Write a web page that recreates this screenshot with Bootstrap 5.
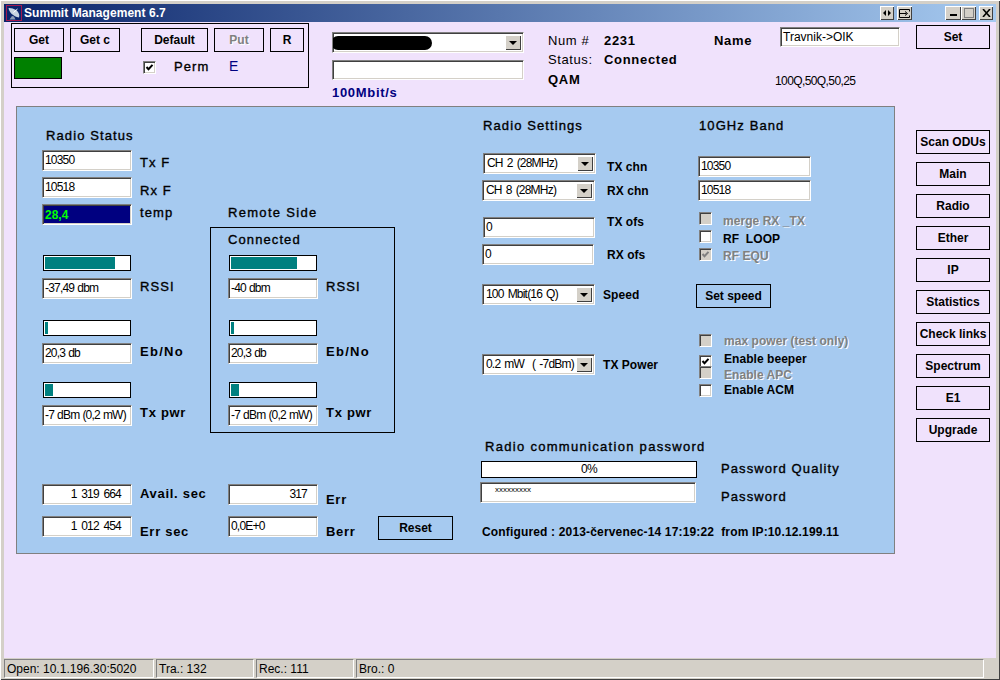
<!DOCTYPE html>
<html lang="en">
<head>
<meta charset="utf-8">
<title>Summit Management 6.7</title>
<link rel="stylesheet" href="https://cdn.jsdelivr.net/npm/bootstrap@5.3.0/dist/css/bootstrap.min.css">
<style>
body{margin:0;background:#d4d0c8;font-family:"Liberation Sans",Arial,sans-serif;color:#000;overflow:hidden}
.win{width:1000px;height:680px;padding:4px 4px 2px;background:#d4d0c8;box-shadow:inset 1px 1px 0 #fff,inset -1px -1px 0 #404040}
.ttl{height:18px;background:linear-gradient(90deg,#0a246a,#a6caf0);color:#fff;font-weight:700;font-size:12px;line-height:18px;letter-spacing:.05px;padding-left:2px}
.ttl svg{flex:none}
.tb{flex:none;height:14px;margin-top:2px;background:#d4d0c8;box-shadow:inset 1px 1px 0 #fff,inset -1px -1px 0 #404040;color:#000}
.tw14{width:14px}.tw15{width:15px}.tw16{width:16px}
.gapm{margin-left:33px}.endm{margin-right:3px}
.client{height:636px;background:#f0e2fc}
.mainc{width:912px}
.side{width:74px}
.hh{height:84px;flex:none}
.lb{font-weight:700;font-size:13px;line-height:16px;letter-spacing:.7px;white-space:nowrap;flex:none}
.lr{font-weight:400;letter-spacing:.6px}
.lm{font-weight:400;letter-spacing:1.1px;-webkit-text-stroke:.35px #000}
.lw{letter-spacing:1.3px}
.ls{font-size:12px;letter-spacing:.05px}
.lc{font-size:12px;letter-spacing:.16px}
.ee{font-size:14px;color:#000080;font-weight:400}
.navy{color:#000080}
.gry{color:#808080;text-shadow:1px 1px 0 #fff}
.btn.fb{--bs-btn-padding-x:0;--bs-btn-padding-y:0;display:block;background:transparent;border:1px solid #000;border-radius:0;color:#000;font-weight:700;font-size:12px;line-height:21px;height:24px;letter-spacing:0;flex:none;white-space:nowrap}
.btn.fb.off{color:#808080;opacity:1;text-shadow:1px 1px 0 #fff}
.form-control.fld{width:90px;height:21px;flex:none;padding:2px 2px 1px;border-radius:0;border:1px solid;border-color:#808080 #fff #fff #808080;box-shadow:inset 1px 1px 0 #404040,inset -1px -1px 0 #d4d0c8;background:#fff;font-size:12px;line-height:14px;letter-spacing:-.8px;word-spacing:.5px;color:#000;white-space:nowrap;overflow:hidden}
.fld.rt{text-align:right;padding-right:10px;word-spacing:2px}
.fld.dk{background:#000080;color:#0f0;font-weight:700;letter-spacing:0;font-size:12px;padding-top:3px}
.fld.wide{letter-spacing:0}
.fld.combo{padding-left:3px;word-spacing:1.5px}
.w113{width:113px!important}.w112{width:112px!important}.w120{width:120px!important}.w192{width:192px!important}.w216{width:216px!important}
.h20{height:20px!important}
.h13{height:13px}
.h21{height:21px}
.combo{position:relative}
.arrow{position:absolute;right:2px;top:2px;bottom:2px;width:16px;background:#d4d0c8;box-shadow:inset 1px 1px 0 #fff,inset -1px -1px 0 #404040}
.arrow::after{content:"";position:absolute;left:4px;top:6px;border:4px solid transparent;border-top:4px solid #000;border-bottom:0}
.blob{display:block;width:101px;height:14px;margin:1px 0 0 -5px;background:#000;border-radius:7px}
.progress.bar{width:88px;height:16px;flex:none;padding:1px;border:1px solid #000;border-radius:0;background:#fff;--bs-progress-bar-bg:#008080}
.progress.pq{width:216px;height:17px;justify-content:center;font-size:12px;line-height:13px;letter-spacing:-.6px;color:#000}
.form-check-input.ck{width:13px;height:13px;flex:none;border-radius:0;border:1px solid;border-color:#808080 #fff #fff #808080;box-shadow:inset 1px 1px 0 #404040,inset -1px -1px 0 #d4d0c8;background-color:#fff;opacity:1}
.ck{margin-top:0}
.form-check-input.ck:disabled{background-color:#d4d0c8;opacity:1}
.form-check-input.ck:checked{background-size:11px;background-image:url("data:image/svg+xml,%3Csvg xmlns='http://www.w3.org/2000/svg' viewBox='0 0 11 11'%3E%3Cpath d='M2.5 5l2 2.2 4-4.4' fill='none' stroke='%23000' stroke-width='2'/%3E%3C/svg%3E")}
.form-check-input.ck:checked:disabled{background-image:url("data:image/svg+xml,%3Csvg xmlns='http://www.w3.org/2000/svg' viewBox='0 0 11 11'%3E%3Cpath d='M2.5 5l2 2.2 4-4.4' fill='none' stroke='%23808080' stroke-width='2'/%3E%3C/svg%3E")}
.grp{width:298px;height:65px;padding:4px 0 0 2px;border:1px solid #000;flex:none;margin-left:7px}
.lamp{width:48px;height:22px;background:#008000;border:1px solid #000;flex:none}
.panel{width:879px;height:448px;margin-left:12px;padding-left:25px;background:#a6caf0;border:1px solid #808080}
.ca{width:168px;flex:none}
.colb{width:270px;flex:none}
.cc{width:218px;flex:none}
.rbox{width:185px;height:206px;border:1px solid #000;padding-left:17px}
.w52{width:52px;flex:none}.w50{width:50px}.w67{width:67px}.w34{width:34px}.w75{width:75px}.w74{width:74px}.w55{width:55px;flex:none}.w56{width:56px;flex:none}.w66{width:66px;flex:none}.w166{width:166px;flex:none}
.pass{font-size:8px!important;line-height:9px!important;padding:2px 0 0 14px!important;letter-spacing:0!important}
.smt{font-size:12px;line-height:16px;letter-spacing:-.6px;white-space:nowrap}
.stat{height:20px;font-size:12px;line-height:18px;gap:2px}
.stat div{border:1px solid;border-color:#808080 #fff #fff #808080;padding-left:2px;height:19px;margin-top:1px;flex:none}
.s150{width:150px}.s98{width:98px}.s628{width:628px}
.t0{margin-top:0}.t1{margin-top:1px}.t2{margin-top:2px}.t3{margin-top:3px}.t4{margin-top:4px}.t5{margin-top:5px}.t6{margin-top:6px}.t7{margin-top:7px}.t8{margin-top:8px}.t10{margin-top:10px}.t11{margin-top:11px}.t16{margin-top:16px}.t18{margin-top:18px}.t19{margin-top:19px}.t21{margin-top:21px}.t22{margin-top:22px}.t23{margin-top:23px}.t24{margin-top:24px}.t26{margin-top:26px}.t30{margin-top:30px}.t42{margin-top:42px}.t49{margin-top:49px}.t51{margin-top:51px}.t58{margin-top:58px}.t81{margin-top:81px}.t98{margin-top:98px}
.tn1{margin-top:-1px}.tn2{margin-top:-2px}.tn3{margin-top:-3px}.tn4{margin-top:-4px}
.x1{margin-left:1px}.x2{margin-left:2px}.x3{margin-left:3px}.x4{margin-left:4px}.x5{margin-left:5px}.x6{margin-left:6px}.x8{margin-left:8px}.x11{margin-left:11px}.x12{margin-left:12px}.x13{margin-left:13px}.x18{margin-left:18px}.x21{margin-left:21px}.x23{margin-left:23px}.x24{margin-left:24px}.x25{margin-left:25px}.x61{margin-left:61px}.x81{margin-left:81px}.xn2{margin-left:-2px}
</style>
</head>
<body>
<div class="win d-flex flex-column">
  <div class="ttl d-flex align-items-start">
    <svg class="t1" width="16" height="16" viewBox="0 0 16 16"><rect x=".5" y=".5" width="15" height="15" fill="#0a246a" stroke="#a01850"/><path d="M2.500 3c.5 4 4.500 8.500 10.500 9.500 1-3-.5-5.500-3-7.500C7.500 3.500 5 2.800 2.500 3z" fill="#c8d4e0"/><path d="M6 11l-2.500 3.500h6L8 11.500z" fill="#8c9cb4"/><path d="M7.500 7.500l4-3.500" stroke="#fff"/></svg>
    <span class="x2">Summit Management 6.7</span>
    <div class="tb tw14 ms-auto d-flex align-items-center justify-content-center"><svg width="8" height="6" viewBox="0 0 8 6"><path d="M3 0v6L0 3zM5 0v6l3-3z"/></svg></div>
    <div class="tb tw15 d-flex align-items-center justify-content-center x3"><svg width="11" height="9" viewBox="0 0 11 9"><path d="M10.500 2.500V.5h-10v8h10v-2M.5 4.500h7M6 2.500l2.500 2-2.500 2" fill="none" stroke="#000"/></svg></div>
    <div class="tb tw16 gapm d-flex align-items-end justify-content-center pb-1"><svg width="7" height="2" viewBox="0 0 7 2"><rect width="7" height="2"/></svg></div>
    <div class="tb tw15 d-flex align-items-center justify-content-center"><svg width="10" height="10" viewBox="0 0 10 10"><rect x=".5" y=".5" width="9" height="9" fill="none" stroke="#808080"/></svg></div>
    <div class="tb tw14 endm d-flex align-items-center justify-content-center x3"><svg width="9" height="8" viewBox="0 0 9 8"><path d="M1 0l7 8M8 0L1 8" stroke="#000" stroke-width="1.600"/></svg></div>
  </div>

  <div class="client d-flex">
    <div class="mainc d-flex flex-column">
      <div class="d-flex hh">
        <div class="grp t1">
          <div class="d-flex">
            <button class="btn fb w50">Get</button>
            <button class="btn fb w50 x6">Get c</button>
            <button class="btn fb w67 x21">Default</button>
            <button class="btn fb w50 x6 off" disabled>Put</button>
            <button class="btn fb w34 x6">R</button>
          </div>
          <div class="d-flex align-items-start t5">
            <div class="lamp"></div>
            <input class="form-check-input ck x81 t4" type="checkbox" checked aria-label="Perm">
            <span class="lb lm w55 x18 t2">Perm</span>
            <span class="lb ee t1">E</span>
          </div>
        </div>
        <div class="x23">
          <div class="form-control fld combo w192 t10"><span class="blob"></span><span class="arrow"></span></div>
          <div class="form-control fld w192 h20 t7"></div>
          <div class="lb navy t5">100Mbit/s</div>
        </div>
        <div class="w166 x24">
          <div class="d-flex t11"><span class="lb lr w56">Num #</span><span class="lb">2231</span></div>
          <div class="d-flex t3"><span class="lb lr w56">Status:</span><span class="lb">Connected</span></div>
          <div class="lb t4">QAM</div>
        </div>
        <div>
          <div class="d-flex align-items-start t5">
            <span class="lb w66 t6">Name</span>
            <div class="form-control fld wide w120 h20">Travnik-&gt;OIK</div>
          </div>
          <div class="smt x61 t24">100Q,50Q,50,25</div>
        </div>
      </div>

      <div class="panel d-flex">
        <div class="ca">
          <div class="lb lm x4 t21">Radio Status</div>
          <div class="d-flex align-items-start h21 t6"><div class="form-control fld">10350</div><span class="lb lm x8 t5">Tx F</span></div>
          <div class="d-flex align-items-start h21 t6"><div class="form-control fld">10518</div><span class="lb lm x8 t6">Rx F</span></div>
          <div class="d-flex align-items-start h21 t6"><div class="form-control fld dk">28,4</div><span class="lb lm x8 t1">temp</span></div>
          <div class="progress bar x1 t30"><div class="progress-bar" style="width:83%"></div></div>
          <div class="d-flex align-items-start h21 t7"><div class="form-control fld">-37,49 dbm</div><span class="lb lm x8 t1">RSSI</span></div>
          <div class="progress bar x1 t21"><div class="progress-bar" style="width:3.6%"></div></div>
          <div class="d-flex align-items-start h21 t7"><div class="form-control fld">20,3 db</div><span class="lb lw x8 t1">Eb/No</span></div>
          <div class="progress bar x1 t18"><div class="progress-bar" style="width:9.5%"></div></div>
          <div class="d-flex align-items-start h21 t7"><div class="form-control fld">-7 dBm (0,2 mW)</div><span class="lb x8">Tx pwr</span></div>
          <div class="d-flex align-items-start h21 t58"><div class="form-control fld rt">1 319 664</div><span class="lb x8 t2">Avail. sec</span></div>
          <div class="d-flex align-items-start h21 t11"><div class="form-control fld rt">1 012 454</div><span class="lb x8 t8">Err sec</span></div>
        </div>

        <div class="colb">
          <div class="lb lm lw x18 t98">Remote Side</div>
          <div class="rbox t6">
            <div class="lb lm t4">Connected</div>
            <div class="progress bar x1 t7"><div class="progress-bar" style="width:78.5%"></div></div>
            <div class="d-flex align-items-start h21 t7"><div class="form-control fld">-40 dbm</div><span class="lb lm x8 t1">RSSI</span></div>
            <div class="progress bar x1 t21"><div class="progress-bar" style="width:3.6%"></div></div>
            <div class="d-flex align-items-start h21 t7"><div class="form-control fld">20,3 db</div><span class="lb lw x8 t1">Eb/No</span></div>
            <div class="progress bar x1 t18"><div class="progress-bar" style="width:9.5%"></div></div>
            <div class="d-flex align-items-start h21 t7"><div class="form-control fld">-7 dBm (0,2 mW)</div><span class="lb x8">Tx pwr</span></div>
          </div>
          <div class="d-flex align-items-start h21 x18 t51"><div class="form-control fld rt">317</div><span class="lb x8 t8">Err</span></div>
          <div class="d-flex align-items-start h21 x18 t11"><div class="form-control fld">0,0E+0</div><span class="lb x8 t8 w52">Berr</span><button class="btn fb w75">Reset</button></div>
        </div>

        <div>
          <div class="d-flex">
            <div class="cc">
              <div class="lb lm x3 t11">Radio Settings</div>
              <div class="d-flex align-items-start h21 x3 t19"><div class="form-control fld combo w113">CH 2 (28MHz)<span class="arrow"></span></div><span class="lb ls x11 t6">TX chn</span></div>
              <div class="d-flex align-items-start h21 x2 t6"><div class="form-control fld combo w113">CH 8 (28MHz)<span class="arrow"></span></div><span class="lb ls x12 t3">RX chn</span></div>
              <div class="d-flex align-items-start h21 x3 t16"><div class="form-control fld w112">0</div><span class="lb ls x12 tn3">TX ofs</span></div>
              <div class="d-flex align-items-start h21 x2 t6"><div class="form-control fld w112">0</div><span class="lb ls x13 t3">RX ofs</span></div>
              <div class="d-flex align-items-start h21 x2 t19"><div class="form-control fld combo w113">100 Mbit(16 Q)<span class="arrow"></span></div><span class="lb ls x8 t3">Speed</span></div>
              <div class="d-flex align-items-start h21 x2 t49"><div class="form-control fld combo w113">0.2 mW &nbsp;( -7dBm)<span class="arrow"></span></div><span class="lb ls x8 t3">TX Power</span></div>
            </div>
            <div>
              <div class="lb lm x1 t11">10GHz Band</div>
              <div class="form-control fld w113 t22">10350</div>
              <div class="form-control fld w113 t3">10518</div>
              <div class="d-flex align-items-start x1 t11 h13"><input class="form-check-input ck" type="checkbox" disabled aria-label="merge"><span class="lb ls gry t1 x11">merge RX _TX</span></div>
              <div class="d-flex align-items-start x1 t5 h13"><input class="form-check-input ck" type="checkbox" aria-label="loop"><span class="lb ls t1 x11">RF &nbsp;LOOP</span></div>
              <div class="d-flex align-items-start x1 t5 h13"><input class="form-check-input ck" type="checkbox" checked disabled aria-label="equ"><span class="lb ls gry x11">RF EQU</span></div>
              <button class="btn fb w75 xn2 t23">Set speed</button>
              <div class="d-flex align-items-start x1 t26 h13"><input class="form-check-input ck" type="checkbox" disabled aria-label="max"><span class="lb ls gry tn1 x12">max power (test only)</span></div>
              <div class="d-flex align-items-start x1 t8 h13"><input class="form-check-input ck" type="checkbox" checked aria-label="beeper"><span class="lb ls tn4 x12">Enable beeper</span></div>
              <div class="d-flex align-items-start x1 tn2 h13"><input class="form-check-input ck" type="checkbox" disabled aria-label="apc"><span class="lb ls gry t1 x12">Enable APC</span></div>
              <div class="d-flex align-items-start x1 t5 h13"><input class="form-check-input ck" type="checkbox" aria-label="acm"><span class="lb ls tn2 x12">Enable ACM</span></div>
            </div>
          </div>
          <div class="lb lm lw x5 t42">Radio communication password</div>
          <div class="d-flex align-items-start t6"><div class="progress bar pq x1">0%</div><span class="lb lm x24">Password Quality</span></div>
          <div class="d-flex align-items-start t4"><div class="form-control fld w216 pass">xxxxxxxxx</div><span class="lb lm x25 t7">Password</span></div>
          <div class="lb lc x2 t19">Configured : 2013-červenec-14 17:19:22 &nbsp;from IP:10.12.199.11</div>
        </div>
      </div>
    </div>

    <div class="side">
      <button class="btn fb w74 t3">Set</button>
      <div class="d-flex flex-column gap-2 t81">
        <button class="btn fb w74">Scan ODUs</button>
        <button class="btn fb w74">Main</button>
        <button class="btn fb w74">Radio</button>
        <button class="btn fb w74">Ether</button>
        <button class="btn fb w74">IP</button>
        <button class="btn fb w74">Statistics</button>
        <button class="btn fb w74">Check links</button>
        <button class="btn fb w74">Spectrum</button>
        <button class="btn fb w74">E1</button>
        <button class="btn fb w74">Upgrade</button>
      </div>
    </div>
  </div>

  <div class="stat d-flex">
    <div class="s150">Open: 10.1.196.30:5020</div>
    <div class="s98">Tra.: 132</div>
    <div class="s98">Rec.: 111</div>
    <div class="s628">Bro.: 0</div>
  </div>
</div>
<script src="https://cdn.jsdelivr.net/npm/bootstrap@5.3.0/dist/js/bootstrap.bundle.min.js"></script>
</body>
</html>
